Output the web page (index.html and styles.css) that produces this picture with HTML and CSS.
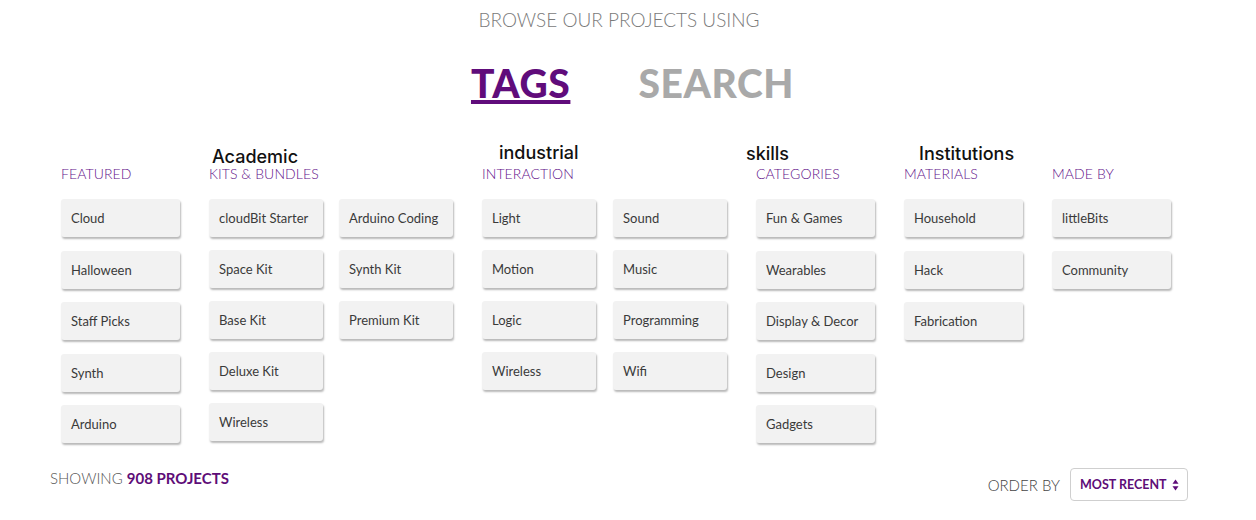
FILE: index.html
```html
<!DOCTYPE html>
<html lang="en">
<head>
<meta charset="utf-8">
<title>Browse projects</title>
<link rel="stylesheet" href="styles.css">
</head>
<body>
<header class="intro">
  <p class="browse">BROWSE OUR PROJECTS USING</p>
  <nav class="modes">
    <a class="mode mode-active" href="#">TAGS</a>
    <a class="mode" href="#">SEARCH</a>
  </nav>
</header>

<section class="tags">
  <div class="col col-featured">
    <div class="col-head"><span class="label">FEATURED</span></div>
    <div class="list">
      <button class="tag">Cloud</button>
      <button class="tag">Halloween</button>
      <button class="tag">Staff Picks</button>
      <button class="tag">Synth</button>
      <button class="tag">Arduino</button>
    </div>
  </div>

  <div class="col col-kits">
    <div class="col-head"><span class="heading h-academic">Academic</span><span class="label">KITS &amp; BUNDLES</span></div>
    <div class="split">
      <div class="list list-tight">
        <button class="tag">cloudBit Starter</button>
        <button class="tag">Space Kit</button>
        <button class="tag">Base Kit</button>
        <button class="tag">Deluxe Kit</button>
        <button class="tag">Wireless</button>
      </div>
      <div class="list list-tight">
        <button class="tag">Arduino Coding</button>
        <button class="tag">Synth Kit</button>
        <button class="tag">Premium Kit</button>
      </div>
    </div>
  </div>

  <div class="col col-interaction">
    <div class="col-head"><span class="heading h-industrial">industrial</span><span class="label">INTERACTION</span></div>
    <div class="split">
      <div class="list list-tight">
        <button class="tag">Light</button>
        <button class="tag">Motion</button>
        <button class="tag">Logic</button>
        <button class="tag">Wireless</button>
      </div>
      <div class="list list-tight">
        <button class="tag">Sound</button>
        <button class="tag">Music</button>
        <button class="tag">Programming</button>
        <button class="tag">Wifi</button>
      </div>
    </div>
  </div>

  <div class="col col-categories">
    <div class="col-head"><span class="heading h-skills">skills</span><span class="label">CATEGORIES</span></div>
    <div class="list">
      <button class="tag">Fun &amp; Games</button>
      <button class="tag">Wearables</button>
      <button class="tag">Display &amp; Decor</button>
      <button class="tag">Design</button>
      <button class="tag">Gadgets</button>
    </div>
  </div>

  <div class="col col-materials">
    <div class="col-head"><span class="heading h-institutions">Institutions</span><span class="label">MATERIALS</span></div>
    <div class="list">
      <button class="tag">Household</button>
      <button class="tag">Hack</button>
      <button class="tag">Fabrication</button>
    </div>
  </div>

  <div class="col col-madeby">
    <div class="col-head"><span class="label">MADE BY</span></div>
    <div class="list">
      <button class="tag">littleBits</button>
      <button class="tag">Community</button>
    </div>
  </div>
</section>

<footer class="results">
  <p class="showing">SHOWING <strong>908 PROJECTS</strong></p>
  <div class="order">
    <span class="order-label">ORDER BY</span>
    <div class="select">
      <span class="select-value">MOST RECENT</span>
      <svg class="select-arrows" width="7" height="12" viewBox="0 0 7 12" aria-hidden="true">
        <path d="M3.5 0.5 L6.5 4.8 L0.5 4.8 Z" fill="#5e0d78"/>
        <path d="M3.5 11.5 L6.5 7.2 L0.5 7.2 Z" fill="#5e0d78"/>
      </svg>
    </div>
  </div>
</footer>
</body>
</html>
```

FILE: styles.css
```css
* { box-sizing: border-box; }

html, body {
  margin: 0;
  padding: 0;
  background: #ffffff;
}

body {
  width: 1256px;
  height: 520px;
  overflow: hidden;
  font-family: "Lato", "Noto Sans", sans-serif;
  color: #333;
}

.intro {
  display: flex;
  flex-direction: column;
  align-items: center;
}

.browse {
  margin: 0;
  padding-top: 8px;
  font-size: 19px;
  line-height: 24px;
  font-weight: 300;
  color: #7a7a7a;
  letter-spacing: 0;
  transform: translateX(-9px);
}

.modes {
  display: flex;
  gap: 68px;
  margin-top: 29px;
  padding-left: 9px;
}

.mode {
  font-size: 39px;
  line-height: 44px;
  font-weight: 900;
  letter-spacing: 0.6px;
  color: #a9a9a9;
  text-decoration: none;
}

.mode-active {
  color: #600c7b;
  text-decoration: underline;
  text-decoration-thickness: 4px;
  text-underline-offset: 2px;
}

.tags {
  display: flex;
  align-items: flex-start;
  gap: 29px;
  padding-left: 61px;
  margin-top: 42px;
}

.col-head {
  position: relative;
  height: 52px;
  display: flex;
  flex-direction: column;
  justify-content: flex-end;
  padding-bottom: 18px;
}

.label {
  font-size: 14px;
  line-height: 15px;
  font-weight: 300;
  color: #62118a;
  letter-spacing: 0.1px;
  white-space: nowrap;
}

.heading {
  position: absolute;
  font-family: "Inter", "Liberation Sans", sans-serif;
  font-size: 18px;
  line-height: 14px;
  font-weight: 500;
  color: #111;
  white-space: nowrap;
}

.h-academic { left: 3px; top: 3px; }
.h-industrial { left: 17px; top: -1px; }
.h-skills { left: -10px; top: 0px; }
.h-institutions { left: 15px; top: 0px; }

.list {
  display: flex;
  flex-direction: column;
  gap: 13.5px;
}

.list-tight { gap: 13px; }

.split {
  display: flex;
  gap: 16px;
}

.tag {
  display: block;
  height: 38px;
  padding: 0 10px;
  border: none;
  border-radius: 3px;
  background: #f2f2f2;
  box-shadow: 1px 2px 2px rgba(0, 0, 0, 0.28);
  font-family: "Lato", "Noto Sans", sans-serif;
  font-size: 13px;
  font-weight: 400;
  color: #3a3a3a;
  text-align: left;
  white-space: nowrap;
  cursor: pointer;
}

.col-featured .tag,
.col-categories .tag,
.col-materials .tag,
.col-madeby .tag { width: 119px; }

.col-kits .tag,
.col-interaction .tag { width: 114px; }

.col-kits .split { gap: 16px; }
.col-interaction .split { gap: 17px; }

.results {
  display: flex;
  justify-content: space-between;
  align-items: flex-start;
  padding: 0 68px 0 50px;
  margin-top: 20px;
}

.showing {
  margin: 0;
  margin-top: 6px;
  font-size: 15px;
  line-height: 18px;
  font-weight: 300;
  color: #555;
}

.showing strong {
  font-weight: 700;
  color: #5e0d78;
}

.order {
  display: flex;
  align-items: center;
  gap: 10px;
  margin-top: 5px;
}

.order-label {
  font-size: 15px;
  font-weight: 300;
  color: #444;
}

.select {
  display: flex;
  align-items: center;
  justify-content: space-between;
  width: 118px;
  height: 33px;
  padding: 0 8px 0 9px;
  border: 1px solid #cfcfcf;
  border-radius: 4px;
  background: #fff;
}

.select-value {
  font-size: 12.5px;
  font-weight: 700;
  color: #5e0d78;
  white-space: nowrap;
}
```
